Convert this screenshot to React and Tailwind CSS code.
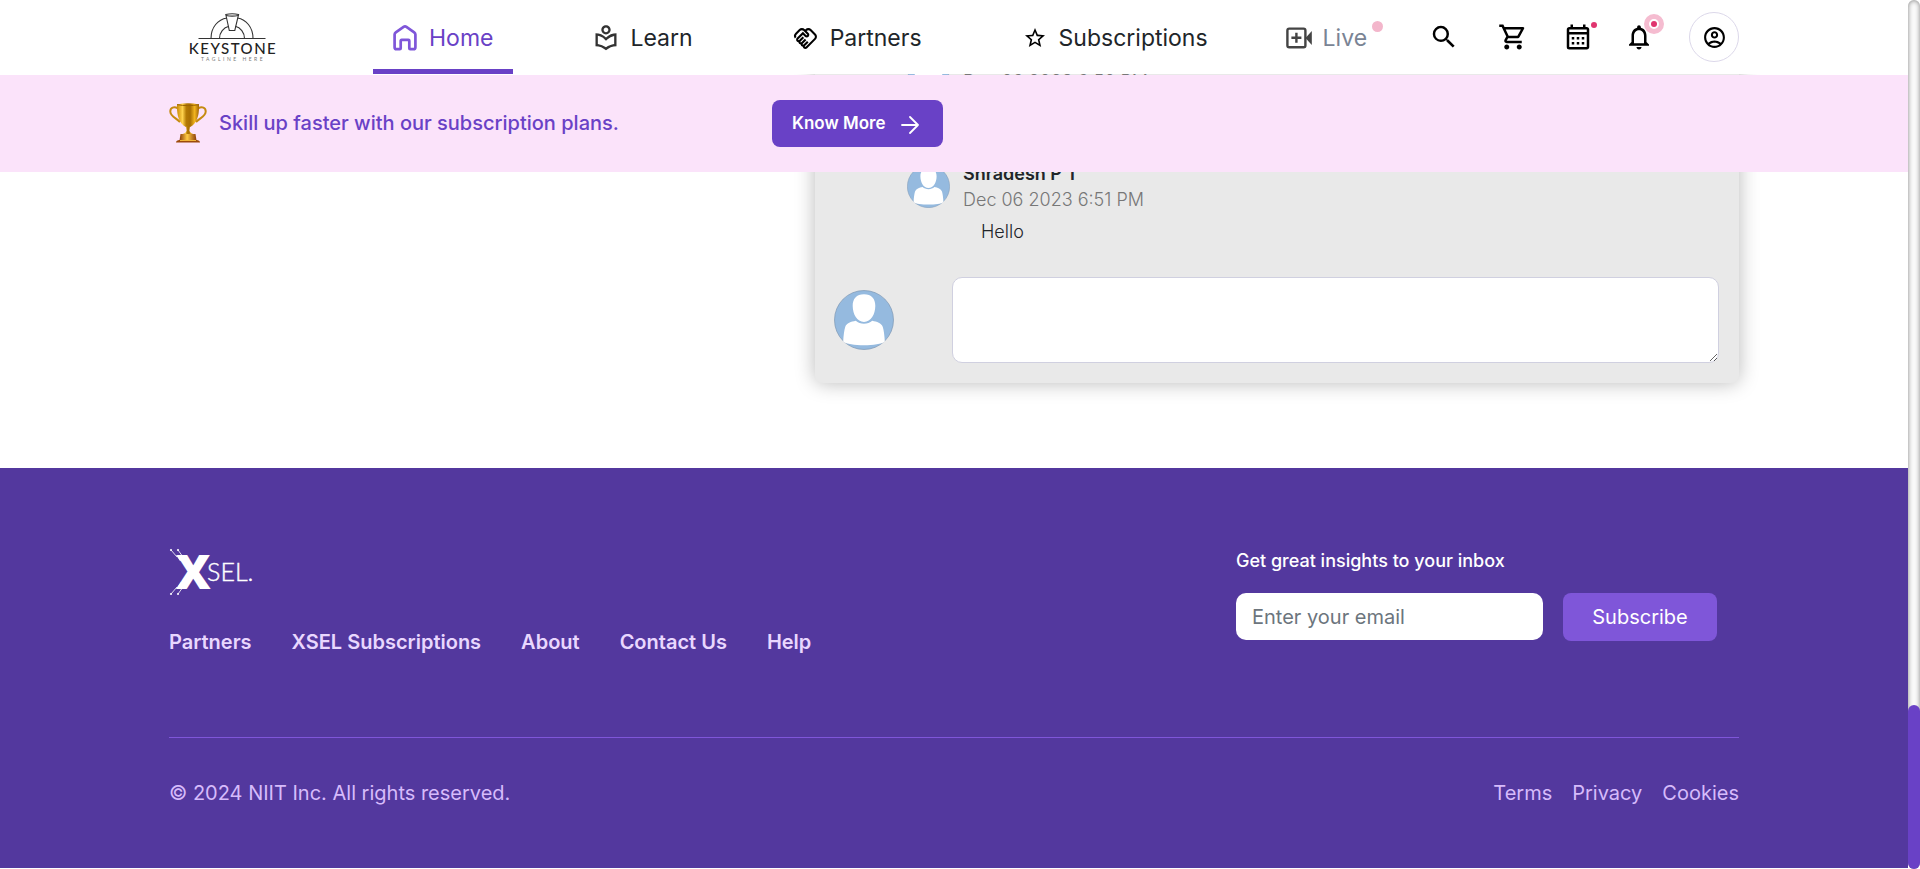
import {
  MdNotificationsNone,
  MdOutlineAccountCircle,
  MdOutlineCalendarMonth,
  MdOutlineHandshake,
  MdOutlineLocalLibrary,
  MdOutlineShoppingCart,
  MdSearch,
  MdStarBorder,
} from "react-icons/md";

function HomeIcon() {
  return (
    <svg viewBox="0 0 24 26" className="h-[26px] w-6" fill="none" stroke="#7f56d9" strokeWidth="2.7" strokeLinejoin="round" aria-hidden="true">
      <path d="M1.6 9.6c0-1 .4-1.6 1.2-2.2L10.600 1.900c.9-.6 1.900-.6 2.800 0l7.800 5.500c.8.6 1.200 1.200 1.200 2.200v12.600c0 1.300-.7 2-2 2h-3.200c-.6 0-.9-.3-.9-.9v-7.500c0-.6-.3-.9-.9-.9H8.600c-.6 0-.9.3-.9.9v7.500c0 .6-.3.9-.9.9H3.600c-1.300 0-2-.7-2-2z" />
    </svg>
  );
}

function LiveIcon() {
  return (
    <svg viewBox="0 0 26 22" className="h-[22px] w-[26px]" fill="none" stroke="#444" strokeWidth="2.4" aria-hidden="true">
      <rect x="1.4" y="1.6" width="18" height="18.600" rx="1.800" />
      <path d="M10.400 5.800v10M5.400 10.800h10" />
      <path d="M19.500 11l6.300-7v14z" fill="#444" stroke="none" />
    </svg>
  );
}

function KeystoneLogo() {
  return (
    <a href="#home" aria-label="Keystone" className="flex w-[92px] flex-col items-center text-[#222]">
      <svg viewBox="0 0 68 27" className="h-[27px] w-[68px]" fill="none" stroke="#333" strokeWidth="1.1" aria-hidden="true">
        <path d="M.5 25.500h67M13 25.500C13 14 20 6.500 29 5M55 25.500C55 14 48 6.500 39.500 5M21.500 25.500c0-6 4-11 9.500-12.200M46.500 25.500c0-6-4-11-9.200-12.200" />
        <path d="M27.800 1.500c4-1 8.600-1 12.800 0L36.800 17.500h-5.500z" />
        <path d="M28 2.500c4 .8 8.400.8 12.400 0" />
      </svg>
      <span className="pl-0.5 font-['Lato'] text-[15px] leading-4 font-medium tracking-widest">KEYSTONE</span>
      <span className="pl-0.5 font-['Lato'] text-[5px] leading-[6px] tracking-[0.5em] text-[#777]">TAGLINE HERE</span>
    </a>
  );
}

function Trophy() {
  return (
    <svg viewBox="0 0 38 40" className="h-10 w-[38px]" aria-hidden="true">
      <defs>
        <linearGradient id="cup" x1="0" x2="1">
          <stop offset="0" stopColor="#c98a06" />
          <stop offset=".25" stopColor="#ffd34d" />
          <stop offset=".42" stopColor="#b47a04" />
          <stop offset=".6" stopColor="#a86f02" />
          <stop offset=".8" stopColor="#f3b51f" />
          <stop offset="1" stopColor="#a06403" />
        </linearGradient>
        <linearGradient id="base" x1="0" x2="1">
          <stop offset="0" stopColor="#8a3c08" />
          <stop offset=".45" stopColor="#ffcb45" />
          <stop offset="1" stopColor="#8a3c08" />
        </linearGradient>
      </defs>
      <path d="M9 5.500C5 3 1.200 4.500 1.300 8.500c.1 5 5.700 6.300 9.700 10.500M29 5.500c4-2.500 7.800-1 7.700 3-.1 5-5.700 6.300-9.700 10.500" fill="none" stroke="#c58a10" strokeWidth="2" />
      <path d="M8 1.500c7-1.600 15-1.600 22 0 .3 10-1.500 18.500-8.800 22.500h-4.400C9.500 20 7.700 11.500 8 1.500z" fill="url(#cup)" />
      <path d="M8 1.600c7 1.400 15 1.400 22 0" fill="none" stroke="#9b6403" strokeWidth="1" />
      <path d="M17 23.500h4l-.6 4c.3 2 2 2.800 4.100 3.800h-11c2.100-1 3.800-1.800 4.100-3.800z" fill="url(#cup)" />
      <path d="M11.500 31h15l1 6.500h-17z" fill="url(#base)" />
      <path d="M7 39.500c0-1.600 1.500-2.500 3.500-2.500h17c2 0 3.500.9 3.500 2.500z" fill="#9c4a0a" />
      <path d="M11 37.500h16" stroke="#f0b53a" strokeWidth="1" />
    </svg>
  );
}

function Avatar({ className }) {
  return (
    <svg viewBox="0 0 60 60" className={className} role="img" aria-label="User avatar">
      <circle cx="30" cy="30" r="29.500" fill="#95badf" stroke="#7d97b3" strokeWidth=".7" />
      <path d="M30 4.300c7.500 0 11.400 4.500 11.300 11.800C41.200 24.500 37 32 30 32S18.800 24.500 18.700 16.100C18.600 8.800 22.500 4.300 30 4.300z" fill="#fff" />
      <path d="M21.800 30.800c4 4 12.400 4 16.400 0 4.800 1 9.200 2.300 10.600 6.200 1 3 1.700 8.500 2 14.500C45 56.500 15 56.500 9.200 51.500c.3-6 1-11.500 2-14.500 1.400-3.900 5.800-5.200 10.600-6.200z" fill="#fff" />
    </svg>
  );
}

function XselLogo() {
  return (
    <svg viewBox="0 0 90 48" className="h-12 w-[90px] overflow-visible" fill="#fff" role="img" aria-label="XSEL">
      <text x="7" y="41" fontFamily="Open Sans" fontWeight="800" fontSize="48">X</text>
      <text x="38" y="33" fontFamily="Lato" fontWeight="300" fontSize="25" stroke="#fff" strokeWidth=".4">SEL.</text>
      <g stroke="#fff" strokeWidth=".8">
        <path d="M2 2l6 7M9 2l5 7M2 46l6-7M9 46l5-7" />
        <circle cx="2" cy="2" r=".7" /><circle cx="9" cy="2" r=".7" />
        <circle cx="2" cy="46" r=".7" /><circle cx="9" cy="46" r=".7" />
      </g>
      <path d="M7 7l4 1 4-1 2 3-6 3zM7 41l4-2 5 2 2-4-6-3z" />
    </svg>
  );
}

const navItems = [
  { label: "Home", icon: <HomeIcon />, active: true },
  { label: "Learn", icon: <MdOutlineLocalLibrary size={28} color="#333" /> },
  { label: "Partners", icon: <MdOutlineHandshake size={25} color="#000" /> },
  { label: "Subscriptions", icon: <MdStarBorder size={24} color="#000" /> },
];

const comments = [
  { author: "Shradesh P T", date: "Dec 06 2023 6:50 PM", text: "Hello" },
  { author: "Shradesh P T", date: "Dec 06 2023 6:51 PM", text: "Hello" },
];

function Header() {
  return (
    <header className="bg-white">
      <div className="mx-auto flex h-[74px] max-w-[1570px] items-center">
        <div className="pl-[17px]">
          <KeystoneLogo />
        </div>
        <nav className="ml-[95px] flex h-full items-center gap-[61px] text-[23px]">
          {navItems.map((item) => (
            <a
              key={item.label}
              href={"#" + item.label.toLowerCase()}
              className={
                item.active
                  ? "flex h-full items-center gap-2.5 border-b-[5px] border-[#6941c6] pt-[7px] pr-5 pl-[18px] text-[#6941c6]"
                  : "flex h-full items-center gap-2.5 pt-0.5 pr-5 pl-[18px] text-[#212529]"
              }
            >
              <span className="flex w-7 justify-center">{item.icon}</span>
              {item.label}
            </a>
          ))}
        </nav>
        <a href="#live" className="relative ml-[57px] flex items-center gap-2.5 pt-0.5 text-[23px] text-[#7a8494]">
          <span className="flex w-7 justify-center"><LiveIcon /></span>
          Live
          <span className="absolute top-0.5 -right-4 size-[11px] rounded-full bg-[#f3b6cb]" />
        </a>
        <div className="ml-auto flex items-center gap-[35px] text-black">
          <button type="button" aria-label="Search" className="mr-1"><MdSearch size={30} /></button>
          <button type="button" aria-label="Cart"><MdOutlineShoppingCart size={30} /></button>
          <button type="button" aria-label="Calendar" className="relative -mr-1">
            <MdOutlineCalendarMonth size={30} />
            <span className="absolute top-0 -right-1 size-1.5 rounded-full bg-[#e0356f]" />
          </button>
          <button type="button" aria-label="Notifications" className="relative">
            <MdNotificationsNone size={30} />
            <span className="absolute -top-2 -right-2.5 flex size-5 items-center justify-center rounded-full border-[5px] border-[#f5bcd0] bg-white">
              <span className="size-1.5 rounded-full bg-[#e0356f]" />
            </span>
          </button>
          <button type="button" aria-label="Account" className="flex size-[50px] items-center justify-center rounded-full border border-[#dcd8ea]">
            <MdOutlineAccountCircle size={25} />
          </button>
        </div>
      </div>
    </header>
  );
}

function Banner() {
  return (
    <div className="mt-px bg-[#fbe3fa]">
      <div className="mx-auto flex h-[97px] max-w-[1570px] items-center">
        <div className="flex w-[603px] items-center gap-3 pb-0.5">
          <Trophy />
          <p className="text-[20px] font-medium text-[#6941c6]">Skill up faster with our subscription plans.</p>
        </div>
        <button type="button" className="flex h-[47px] items-center gap-4 rounded-lg bg-[#6941c6] pr-6 pl-5 text-[17px] font-semibold text-white">
          Know More
          <svg viewBox="0 0 18 18" className="mt-0.5 size-[18px]" fill="none" stroke="#fff" strokeWidth="1.800" strokeLinecap="round" strokeLinejoin="round" aria-hidden="true">
            <path d="M1 9h16M9 1l8 8-8 8" />
          </svg>
        </button>
      </div>
    </div>
  );
}

function Discussion() {
  return (
    <main className="mx-auto flex w-full max-w-[1570px] justify-end pb-[85px]">
      <section className="w-[924px] rounded-lg bg-[#e9e9e9] p-5 pl-[19px] shadow-[0_0_20px_rgba(0,0,0,0.28)]">
        <ul className="flex flex-col gap-[34px] pl-[73px] text-[18px] leading-[26px] font-light">
          {comments.map((c) => (
            <li key={c.date} className="flex gap-[13px]">
              <Avatar className="mt-1 size-[43px]" />
              <div>
                <p className="font-semibold text-[#212529]">{c.author}</p>
                <p className="text-[#777]">{c.date}</p>
                <p className="mt-1.5 pl-[18px] text-[#212529]">{c.text}</p>
              </div>
            </li>
          ))}
        </ul>
        <div className="mt-8 flex items-center">
          <Avatar className="size-[60px] shrink-0" />
          <textarea aria-label="Write a comment" className="ml-[58px] block h-[86px] flex-1 resize rounded-[10px] border border-[#d0d0e0] bg-white p-3 text-[18px]" />
        </div>
      </section>
    </main>
  );
}

function Footer() {
  return (
    <footer className="bg-[#53389e] text-[20px]">
      <div className="mx-auto max-w-[1570px] pt-20 pb-[60px]">
        <div className="flex justify-between border-b border-[#7f56d9] pb-20">
          <div>
            <XselLogo />
            <nav className="mt-[31px] flex gap-10 font-semibold text-[#e9d7fe]">
              <a href="#partners">Partners</a>
              <a href="#xsel">XSEL Subscriptions</a>
              <a href="#about">About</a>
              <a href="#contact">Contact Us</a>
              <a href="#help">Help</a>
            </nav>
          </div>
          <form className="w-[503px]" onSubmit={(e) => e.preventDefault()}>
            <label htmlFor="email" className="block text-[18px] leading-[26px] font-medium text-white">Get great insights to your inbox</label>
            <div className="mt-[19px] flex gap-5">
              <input id="email" type="email" placeholder="Enter your email" className="h-[47px] w-[307px] rounded-[10px] bg-white px-4 placeholder:text-[#6c757d]" />
              <button type="submit" className="h-12 w-[154px] rounded-lg bg-[#7f56d9] text-white">Subscribe</button>
            </div>
          </form>
        </div>
        <div className="flex justify-between pt-10 text-[#d6bbfb]">
          <p>© 2024 NIIT Inc. All rights reserved.</p>
          <div className="flex gap-5">
            <a href="#terms">Terms</a>
            <a href="#privacy">Privacy</a>
            <a href="#cookies">Cookies</a>
          </div>
        </div>
      </div>
    </footer>
  );
}

export default function App() {
  return (
    <div className="flex h-screen overflow-hidden bg-white font-['Inter',sans-serif]">
      <div className="relative flex min-w-0 flex-1 flex-col justify-end pb-px">
        <Discussion />
        <Footer />
        <div className="absolute inset-x-0 top-0 z-10">
          <Header />
          <Banner />
        </div>
      </div>
      <div className="flex w-3 flex-col justify-end rounded-full bg-[#fafafa] shadow-[inset_0_0_5px_#808080]">
        <div className="h-[164px] rounded-full bg-[#6941c6]" />
      </div>
    </div>
  );
}
